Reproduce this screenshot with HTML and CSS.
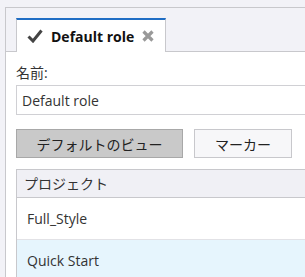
FILE: index.html
```html
<!DOCTYPE html>
<html lang="ja">
<head>
    <meta charset="UTF-8">
    <title>Default role</title>
    <link rel="stylesheet" href="styles.css">
</head>
<body>
    <div class="panel">
        <div class="tab-bar">
            <div class="tab">
                <svg class="tab-check" width="16" height="14" viewBox="0 0 16 14">
                    <path d="M1.5 7.5 L6 12 L14.5 1.5" fill="none" stroke="#444" stroke-width="3"/>
                </svg>
                <span class="tab-title">Default role</span>
                <svg class="tab-close" width="12" height="12" viewBox="0 0 12 12">
                    <path d="M1.5 1.5 L10.5 10.5 M10.5 1.5 L1.5 10.5" stroke="#999" stroke-width="3.2"/>
                </svg>
            </div>
        </div>
        <div class="content">
            <label class="field-label" for="roleName">名前:</label>
            <input type="text" id="roleName" class="field-input" value="Default role">

            <div class="button-row">
                <button class="btn btn-active">デフォルトのビュー</button>
                <button class="btn">マーカー</button>
            </div>

            <div class="grid">
                <div class="grid-head">プロジェクト</div>
                <div class="grid-row">Full_Style</div>
                <div class="grid-row grid-row-selected">Quick Start</div>
            </div>
        </div>
    </div>
</body>
</html>
```

FILE: styles.css
```css
body {
    margin: 0;
    background-color: #f2f2f7;
    font-family: "Open Sans", "Noto Sans CJK JP", sans-serif;
    font-size: 14px;
    color: #333;
    height: 277px;
    overflow: hidden;
}
.panel {
    margin: 7px 0 0 5px;
    border-top: 1px solid #c8c8cc;
    border-left: 1px solid #c8c8cc;
}
.tab-bar {
    padding: 10px 0 0 10px;
    border-bottom: 1px solid #c8c8cc;
    background-color: #f2f2f7;
    height: 33px;
}
.tab {
    display: flex;
    align-items: center;
    width: 150px;
    height: 34px;
    box-sizing: border-box;
    padding: 0 0 0 10px;
    background-color: #fff;
    border-top: 2px solid #1f6dc4;
    border-left: 1px solid #c8c8cc;
    border-right: 1px solid #c8c8cc;
}
.tab-check {
    margin-right: 8px;
}
.tab-title {
    font-weight: bold;
    font-size: 14px;
    color: #111;
    white-space: nowrap;
    margin-right: 8px;
}
.content {
    background-color: #fff;
    padding: 11px 0 0 10px;
    height: 214px;
}
.field-label {
    display: block;
    line-height: 20px;
}
.field-input {
    display: block;
    width: 289px;
    height: 30px;
    box-sizing: border-box;
    margin-top: 2px;
    padding: 0 5px;
    border: 1px solid #d0d0d4;
    border-right: none;
    font-family: inherit;
    font-size: 14px;
    color: #333;
}
.button-row {
    display: flex;
    gap: 11px;
    margin-top: 14px;
}
.btn {
    height: 29px;
    padding: 0;
    font-family: inherit;
    font-size: 14px;
    color: #222;
    background-color: #f7f7f9;
    border: 1px solid #c8c8cc;
    width: 98px;
}
.btn-active {
    width: 167px;
    background-color: #c9c9c9;
    border-color: #a8a8a8;
}
.grid {
    margin-top: 11px;
    border-top: 1px solid #c8c8cc;
    border-left: 1px solid #c8c8cc;
}
.grid-head {
    height: 27px;
    line-height: 27px;
    padding-left: 7px;
    background-color: #f0f0f5;
    border-bottom: 1px solid #c8c8cc;
}
.grid-row {
    height: 41px;
    line-height: 41px;
    padding-left: 10px;
    border-bottom: 1px solid #e2e2e6;
}
.grid-row-selected {
    height: 37px;
    line-height: 42px;
    border-bottom: none;
    background-color: #e6f5fd;
}
```
